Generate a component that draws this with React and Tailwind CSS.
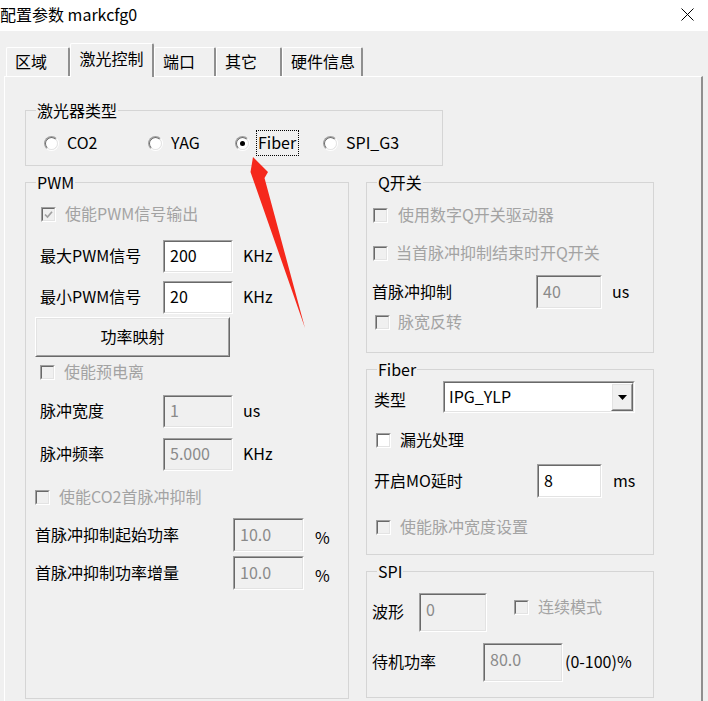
import React from 'react';

const FONT = "font-['Noto_Sans_CJK_SC','Noto_Sans',sans-serif]";

function Sunken({ className = '', disabled = false, children }) {
  return (
    <div className={`border border-t-[#a0a0a0] border-l-[#a0a0a0] border-b-white border-r-white ${className}`}>
      <div
        className={`h-full w-full border border-t-[#696969] border-l-[#696969] border-b-[#e3e3e3] border-r-[#e3e3e3] ${
          disabled ? 'bg-[#f0f0f0]' : 'bg-white'
        }`}
      >
        {children}
      </div>
    </div>
  );
}

function Raised({ className = '', children }) {
  return (
    <div className={`border border-t-white border-l-white border-b-[#696969] border-r-[#696969] bg-[#f0f0f0] ${className}`}>
      <div className="h-full w-full border border-t-[#e3e3e3] border-l-[#e3e3e3] border-b-[#a0a0a0] border-r-[#a0a0a0]">
        {children}
      </div>
    </div>
  );
}

function Edit({ value, disabled, className = '', high = false }) {
  return (
    <Sunken disabled={disabled} className={className}>
      <div
        className={`flex h-full pl-[5px] ${high ? 'items-start pt-[2px]' : 'items-center pb-[3px]'} ${
          disabled ? 'text-[#8a8a8a]' : 'text-black'
        }`}
      >
        {value}
      </div>
    </Sunken>
  );
}

function Check({ label, disabled = false, checked = false, gap = 'ml-[9px]' }) {
  return (
    <div className="flex items-center">
      <Sunken disabled={disabled} className="h-[15px] w-[15px] shrink-0">
        {checked && (
          <svg width="11" height="11" viewBox="0 0 11 11">
            <path d="M2 5.5 L4.5 8 L9 2.8" fill="none" stroke="#a0a0a0" strokeWidth="1.7" />
          </svg>
        )}
      </Sunken>
      <span className={`${gap} pb-[3px] leading-5 ${disabled ? 'text-[#a3a3a3]' : 'text-black'}`}>{label}</span>
    </div>
  );
}

function Radio({ label, checked = false, focus = false, className = '' }) {
  return (
    <div className={`flex items-center ${className}`}>
      <div className="h-[15px] w-[15px] shrink-0 rounded-full border border-t-[#a0a0a0] border-l-[#a0a0a0] border-b-white border-r-white">
        <div className="flex h-full w-full items-center justify-center rounded-full border border-t-[#696969] border-l-[#696969] border-b-[#e3e3e3] border-r-[#e3e3e3] bg-white">
          {checked && <div className="h-[5px] w-[5px] rounded-full bg-black" />}
        </div>
      </div>
      <span
        className={`ml-[6px] flex h-[26px] items-center border border-dotted pb-[2px] pl-[1px] pr-[2px] ${
          focus ? 'border-black' : 'border-transparent'
        }`}
      >
        {label}
      </span>
    </div>
  );
}

function Group({ title, className = '', children }) {
  return (
    <fieldset className={`border border-[#d5d5d5] ${className}`}>
      <legend className="ml-[10px] px-[1px] leading-5">{title}</legend>
      {children}
    </fieldset>
  );
}

function Tab({ label, active, className = '' }) {
  if (active) {
    return (
      <div
        className={`relative z-10 -mb-px flex h-[34px] items-start justify-center rounded-t-[2px] border-l border-t border-l-white border-t-white border-r-2 border-r-[#8f8f8f] bg-[#f0f0f0] pt-[2px] ${className}`}
      >
        {label}
      </div>
    );
  }
  return (
    <div
      className={`flex h-[29px] items-center rounded-t-[2px] border-l border-t border-l-white border-t-white border-r-2 border-r-[#8f8f8f] bg-[#f0f0f0] pb-[2px] pl-[8px] ${className}`}
    >
      {label}
    </div>
  );
}

function Label({ className = '', children }) {
  return <span className={`pb-[3px] ${className}`}>{children}</span>;
}

export default function App() {
  return (
    <div className={`relative flex h-[701px] w-[708px] flex-col overflow-hidden bg-[#f0f0f0] text-[16px] text-black ${FONT}`}>
      {/* title bar */}
      <div className="flex h-[31px] shrink-0 items-center justify-between bg-white">
        <span className="pb-[3px] text-[16px] leading-none">配置参数 markcfg0</span>
        <svg width="13" height="13" viewBox="0 0 13 13" className="mb-[3px] mr-[14px]">
          <path d="M0.5 0.5 L12.5 12.5 M12.5 0.5 L0.5 12.5" stroke="#000" strokeWidth="1" />
        </svg>
      </div>

      <div className="flex flex-1 flex-col pl-[4px] pr-[5px] pt-[12px]">
        {/* tabs */}
        <div className="flex h-[33px] shrink-0 items-end pl-[2px]">
          <Tab label="区域" className="w-[64px] border-r-0" />
          <Tab label="激光控制" active className="w-[84px]" />
          <Tab label="端口" className="w-[62px] pl-[6px]" />
          <Tab label="其它" className="w-[66px]" />
          <Tab label="硬件信息" className="w-[81px]" />
        </div>

        {/* panel */}
        <div className="flex-1 border-l border-t border-l-white border-t-white border-r-2 border-r-[#8f8f8f] pl-[20px] pt-[23px]">
          <Group title="激光器类型" className="h-[66px] w-[418px]">
            <div className="mt-[10px] flex items-center pl-[18px]">
              <Radio label="CO2" className="w-[104px]" />
              <Radio label="YAG" className="w-[87px]" />
              <Radio label="Fiber" checked focus className="w-[88px]" />
              <Radio label="SPI_G3" />
            </div>
          </Group>

          <div className="mt-[6px] flex gap-[17px]">
            {/* PWM */}
            <Group title="PWM" className="h-[527px] w-[324px]">
              <div className="mt-[12px] flex h-[20px] items-center pl-[15px]">
                <Check label="使能PWM信号输出" disabled checked />
              </div>
              <div className="mt-[16px] flex h-[33px] items-center pl-[14px]">
                <Label className="w-[123px]">最大PWM信号</Label>
                <Edit value="200" className="h-[33px] w-[70px]" />
                <Label className="ml-[10px]">KHz</Label>
              </div>
              <div className="mt-[8px] flex h-[33px] items-center pl-[14px]">
                <Label className="w-[123px]">最小PWM信号</Label>
                <Edit value="20" className="h-[33px] w-[70px]" />
                <Label className="ml-[10px]">KHz</Label>
              </div>
              <div className="mt-[3px] pl-[9px]">
                <Raised className="h-[40px] w-[195px]">
                  <div className="flex h-full items-center justify-center pb-[2px]">功率映射</div>
                </Raised>
              </div>
              <div className="mt-[5px] flex h-[20px] items-center pl-[14px]">
                <Check label="使能预电离" disabled />
              </div>
              <div className="mt-[13px] flex h-[33px] items-center pl-[14px]">
                <Label className="w-[123px]">脉冲宽度</Label>
                <Edit value="1" disabled className="h-[33px] w-[70px]" />
                <Label className="ml-[10px]">us</Label>
              </div>
              <div className="mt-[10px] flex h-[33px] items-center pl-[14px]">
                <Label className="w-[123px]">脉冲频率</Label>
                <Edit value="5.000" disabled className="h-[33px] w-[70px]" />
                <Label className="ml-[10px]">KHz</Label>
              </div>
              <div className="mt-[16px] flex h-[20px] items-center pl-[9px]">
                <Check label="使能CO2首脉冲抑制" disabled />
              </div>
              <div className="mt-[11px] flex h-[34px] items-center pl-[9px]">
                <Label className="w-[198px]">首脉冲抑制起始功率</Label>
                <Edit value="10.0" disabled className="h-[34px] w-[71px]" />
                <span className="ml-[11px] pt-[3px]">%</span>
              </div>
              <div className="mt-[4px] flex h-[34px] items-center pl-[9px]">
                <Label className="w-[198px]">首脉冲抑制功率增量</Label>
                <Edit value="10.0" disabled className="h-[34px] w-[71px]" />
                <span className="ml-[11px] pt-[3px]">%</span>
              </div>
            </Group>

            <div className="flex flex-col gap-[6px]">
              {/* Q switch */}
              <Group title="Q开关" className="h-[181px] w-[288px]">
                <div className="mt-[13px] flex h-[20px] items-center pl-[6px]">
                  <Check label="使用数字Q开关驱动器" disabled gap="ml-[10px]" />
                </div>
                <div className="mt-[18px] flex h-[20px] items-center pl-[6px]">
                  <Check label="当首脉冲抑制结束时开Q开关" disabled gap="ml-[8px]" />
                </div>
                <div className="mt-[12px] flex h-[34px] items-center pl-[5px]">
                  <Label className="w-[164px]">首脉冲抑制</Label>
                  <Edit value="40" disabled className="h-[34px] w-[66px]" />
                  <Label className="ml-[10px]">us</Label>
                </div>
                <div className="mt-[3px] flex h-[20px] items-center pl-[8px]">
                  <Check label="脉宽反转" disabled gap="ml-[8px]" />
                </div>
              </Group>

              {/* Fiber */}
              <Group title="Fiber" className="h-[196px] w-[288px]">
                <div className="mt-[2px] flex h-[32px] items-center pl-[7px]">
                  <span className="w-[69px] pt-[3px]">类型</span>
                  <Sunken className="h-[32px] w-[192px]">
                    <div className="flex h-full items-center">
                      <span className="flex-1 pb-[3px] pl-[4px]">IPG_YLP</span>
                      <Raised className="h-full w-[22px]">
                        <div className="flex h-full items-center justify-center">
                          <svg width="9" height="5" viewBox="0 0 9 5">
                            <path d="M0 0 H9 L4.5 5 Z" fill="#000" />
                          </svg>
                        </div>
                      </Raised>
                    </div>
                  </Sunken>
                </div>
                <div className="mt-[17px] flex h-[20px] items-center pl-[9px]">
                  <Check label="漏光处理" />
                </div>
                <div className="mt-[14px] flex h-[34px] items-center pl-[7px]">
                  <Label className="w-[163px]">开启MO延时</Label>
                  <Edit value="8" className="h-[34px] w-[65px]" />
                  <Label className="ml-[11px]">ms</Label>
                </div>
                <div className="mt-[19px] flex h-[20px] items-center pl-[9px]">
                  <Check label="使能脉冲宽度设置" disabled />
                </div>
              </Group>

              {/* SPI */}
              <Group title="SPI" className="h-[137px] w-[288px]">
                <div className="mt-[12px] flex h-[39px] items-center pl-[5px]">
                  <Label className="w-[47px]">波形</Label>
                  <Edit value="0" disabled high className="h-[39px] w-[68px]" />
                  <div className="ml-[27px] pb-[10px]">
                    <Check label="连续模式" disabled />
                  </div>
                </div>
                <div className="mt-[11px] flex h-[39px] items-center pl-[5px]">
                  <Label className="w-[111px]">待机功率</Label>
                  <Edit value="80.0" disabled high className="h-[39px] w-[80px]" />
                  <Label className="ml-[2px]">(0-100)%</Label>
                </div>
              </Group>
            </div>
          </div>
        </div>
      </div>

      {/* red annotation arrow */}
      <svg className="pointer-events-none absolute inset-0" width="708" height="701" viewBox="0 0 708 701">
        <polygon points="253,157 268,172 264.5,178 305,328 250.5,172" fill="#f5281c" />
      </svg>
    </div>
  );
}
